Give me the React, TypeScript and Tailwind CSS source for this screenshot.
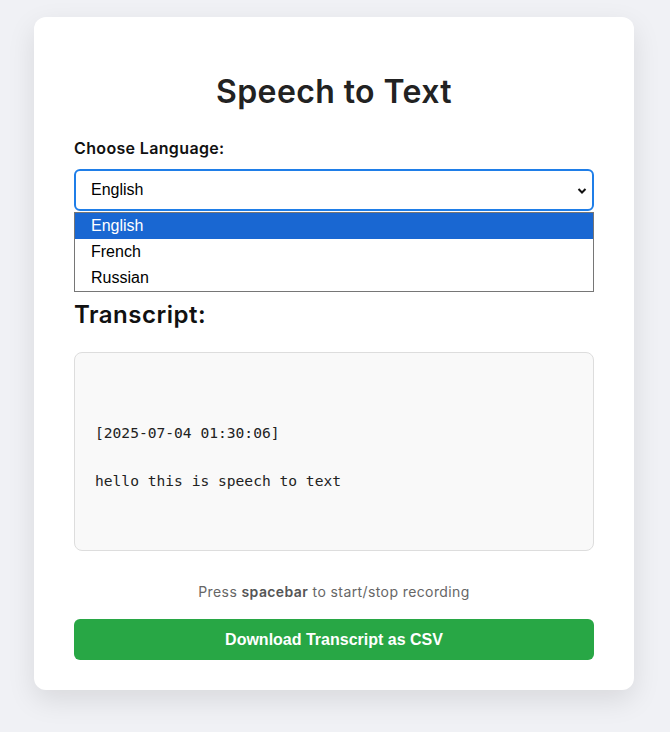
export default function App() {
  const heading = { fontFamily: "Inter, 'Noto Sans', sans-serif" };
  return (
    <div className="min-h-[732px] w-full bg-[#f0f1f5] pt-[17px]" style={heading}>
      <div className="ml-[34px] flex w-[600px] flex-col rounded-xl bg-white px-10 pt-[55px] pb-[30px] shadow-[0_10px_28px_rgba(0,0,0,0.1)]">
        <h1 className="text-center text-[32px] font-semibold leading-[40px] tracking-[0.4px] text-[#222]">Speech to Text</h1>
        <label className="mt-[26px] text-[16px] font-semibold leading-[20px] tracking-[0.35px] text-[#111]">Choose Language:</label>
        <div className="relative mt-[11px]">
          <div className="flex h-[42px] items-center justify-between rounded-md border-2 border-[#1f7ee8] pl-[15px] pr-[5px] font-['Liberation_Sans',Arial,sans-serif] text-[16px] text-black">
            <span>English</span>
            <svg width="10" height="8" viewBox="0 0 10 8" className="mt-[2px]">
              <polyline points="1.5,2 5,5.5 8.5,2" fill="none" stroke="#111" strokeWidth="2" />
            </svg>
          </div>
          <div className="absolute left-0 right-0 top-[43px] z-10 border border-[#767676] bg-white font-['Liberation_Sans',Arial,sans-serif] text-[16px]">
            <div className="flex h-[26px] items-center bg-[#1967d2] pl-4 text-white">English</div>
            <div className="flex h-[26px] items-center pl-4 text-black">French</div>
            <div className="flex h-[26px] items-center pl-4 text-black">Russian</div>
          </div>
        </div>
        <h2 className="mt-[88px] text-[24px] font-semibold leading-[32px] tracking-[0.5px] text-[#111]">Transcript:</h2>
        <div className="mt-[21px] h-[199px] rounded-lg border border-[#dddddd] bg-[#f9f9f9] px-5 pt-5 font-['DejaVu_Sans_Mono',monospace] text-[14.6px] leading-[24px] text-[#222]">
          <div className="h-[48px]" />
          <div>[2025-07-04 01:30:06]</div>
          <div className="h-[24px]" />
          <div>hello this is speech to text</div>
        </div>
        <p className="mt-[31px] text-center text-[14px] leading-[20px] tracking-[0.4px] text-[#666]">
          Press <span className="font-semibold text-[#555]">spacebar</span> to start/stop recording
        </p>
        <button className="mt-[17px] flex h-[41px] items-center justify-center rounded-md bg-[#28a745] font-['Liberation_Sans',Arial,sans-serif] text-[16px] font-bold text-white">
          Download Transcript as CSV
        </button>
      </div>
    </div>
  );
}
